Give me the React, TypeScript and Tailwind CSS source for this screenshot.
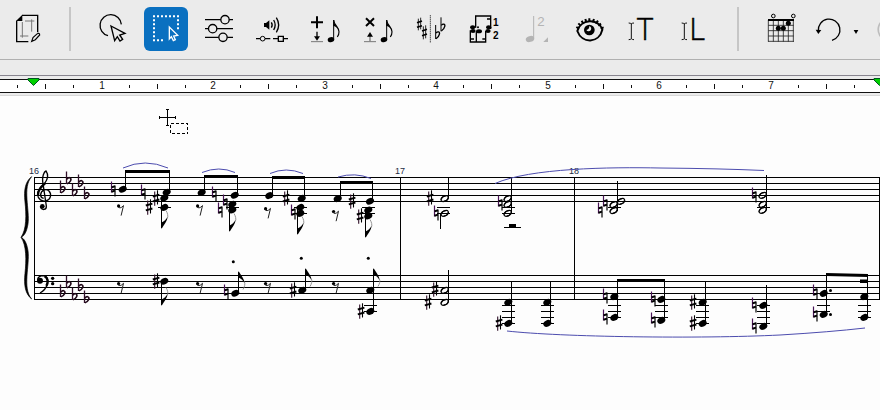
import type { ReactNode } from 'react';
import clsx from 'clsx';

interface ToolButtonProps {
  label: string;
  active?: boolean;
  disabled?: boolean;
  wide?: boolean;
  children: ReactNode;
}

// Icons are drawn on a grid three times finer than the button itself
function ToolButton({ label, active, disabled, wide, children }: ToolButtonProps) {
  return (
    <button
      type="button"
      aria-label={label}
      aria-pressed={active}
      disabled={disabled}
      className={clsx(
        'h-11 shrink-0 rounded-md',
        wide ? 'w-[53px]' : 'w-11',
        active ? 'bg-[#0a70c0] text-white' : 'text-black'
      )}
    >
      <svg viewBox={wide ? '0 0 159 132' : '0 0 132 132'} className="block h-11 w-full" fill="none" stroke="currentColor" strokeWidth={4}>
        {children}
      </svg>
    </button>
  );
}

function Separator() {
  return <div className="mr-[11px] ml-2.5 h-11 w-0.5 shrink-0 bg-[#c6c6c6]" />;
}

function EighthNote() {
  return (
    <g>
      <ellipse cx="84" cy="98" rx="10" ry="7.5" transform="rotate(-18 84 98)" fill="currentColor" stroke="none" />
      <path d="M92 97V39" strokeWidth={3} />
      <path d="M92 39C93 55 108 60 108 74C108 80 106 86 103 90" strokeWidth={3.5} />
      <path d="M91 40C93 52 104 58 107 68C101 60 96 58 91 57Z" fill="currentColor" stroke="none" />
    </g>
  );
}

function TextCaret() {
  return <path d="M31 49V95M23 48Q29 48 31 51Q33 48 39 48M23 98Q29 98 31 95Q33 98 39 98" stroke="#111" strokeWidth={3} />;
}

function Toolbar() {
  return (
    <header className="flex h-[60px] items-start gap-[9px] overflow-hidden border-b border-[#b0b0b0] bg-[#ebebeb] pt-[7px] pl-1.5">
      <ToolButton label="Page layout">
        <path d="M32 41V104H67M48 25H95V76" />
        <path d="M49 23L30 42H49Z" fill="currentColor" stroke="none" />
        <path d="M49 45V92M77 37V74M57 42H85M42 87H67" stroke="#777" strokeWidth={3} />
        <path d="M77 103L81 92L94 80Q101 77 101 84L88 98Z" strokeWidth={3.5} />
      </ToolButton>
      <Separator />
      <ToolButton label="Lasso selection">
        <path d="M51 86A32 32 0 1 1 91 52" />
        <path d="M60 57L102 79L86 84L95 97L87 102L79 89L71 101Z" />
      </ToolButton>
      <ToolButton label="Rectangle selection" active>
        <path d="M27 28H105" strokeWidth={6} strokeDasharray="6 6" />
        <path d="M30 37V103" strokeWidth={6} strokeDasharray="6 6" />
        <path d="M102 37V70" strokeWidth={6} strokeDasharray="6 6" />
        <path d="M39 100H60" strokeWidth={6} strokeDasharray="6 6" />
        <path d="M76 60V96L82 89L88 101L94 98L89 87L101 85Z" strokeWidth={4} />
      </ToolButton>
      <ToolButton label="Filter options">
        <path d="M24 38H108M24 65H108M24 91H108" />
        <circle cx="84" cy="38" r="12.5" fill="#ebebeb" />
        <circle cx="47" cy="65" r="12.5" fill="#ebebeb" />
        <circle cx="78" cy="91" r="12.5" fill="#ebebeb" />
      </ToolButton>
      <ToolButton label="Playback settings">
        <path d="M42 48H48L58 40V68L48 60H42Z" fill="currentColor" stroke="none" />
        <path d="M64 46Q69 54 64 62M71 39Q80 54 71 69M79 32Q93 54 79 76" />
        <path d="M18 95H31M45 95H61M69 95H85M100 95H114" />
        <circle cx="38" cy="95" r="7" strokeWidth={3} />
        <path d="M85 88H100V103H85Z" />
      </ToolButton>
      <ToolButton label="Insert note">
        <path d="M24 46H60M42 28V64" strokeWidth={6} />
        <path d="M42 74V92" />
        <path d="M33 88H51L42 101Z" fill="currentColor" stroke="none" />
        <path d="M24 104H60" stroke="#777" strokeWidth={3} />
        <EighthNote />
      </ToolButton>
      <ToolButton label="Delete note">
        <path d="M30 34L54 57M54 34L30 57" strokeWidth={6} />
        <path d="M42 87V103" stroke="#777" />
        <path d="M33 89H51L42 75Z" fill="currentColor" stroke="none" />
        <path d="M24 104H60" stroke="#777" strokeWidth={3} />
        <EighthNote />
      </ToolButton>
      <ToolButton label="Accidentals">
        <path d="M28 35V70M35 32V67M43 58V97M50 55V94" strokeWidth={2.5} />
        <path d="M24 47L39 42M24 61L39 56M39 72L54 67M39 86L54 81" strokeWidth={5} />
        <path d="M64 25V107" strokeWidth={3} strokeDasharray="3 3" />
        <path d="M80 54V96M96 31V73" strokeWidth={3} />
        <path d="M81 78C86 72 94 74 91 82C90 88 85 92 81 95M97 55C102 49 110 51 107 59C106 65 101 69 97 72" strokeWidth={4} />
      </ToolButton>
      <ToolButton label="Voices">
        <path d="M41 62V27H86V66M75 36H86" />
        <path d="M25 70V105H71V72M43 74V105M26 96H36M61 96H71" />
        <g fill="currentColor" stroke="none">
          <ellipse cx="32" cy="61" rx="8" ry="6" />
          <ellipse cx="33" cy="72" rx="8" ry="6" />
          <ellipse cx="51" cy="73" rx="9" ry="6" />
          <ellipse cx="80" cy="61" rx="8" ry="6" />
          <ellipse cx="78" cy="72" rx="8" ry="6" />
          <circle cx="48" cy="61" r="3" />
          <g className="font-['Liberation_Sans'] font-bold" fontSize="30">
            <text x="93" y="57">1</text>
            <text x="93" y="96">2</text>
          </g>
        </g>
      </ToolButton>
      <ToolButton label="Second voice note" disabled>
        <ellipse cx="45" cy="96" rx="13" ry="9" transform="rotate(-18 45 96)" fill="#b4b4b4" stroke="none" />
        <path d="M56 94V27" stroke="#b4b4b4" strokeWidth={3} />
        <path d="M99 91V105H85Z" fill="#b4b4b4" stroke="none" />
        <text x="67" y="57" fontSize="40" fill="#b4b4b4" stroke="none" className="font-['Liberation_Sans']">2</text>
      </ToolButton>
      <ToolButton label="Show or hide">
        <path d="M28 72C38 35 92 33 103 68C93 110 42 111 28 72Z" strokeWidth={6} />
        <circle cx="64" cy="69" r="16" fill="currentColor" stroke="none" />
        <path d="M64 57A8 8 0 1 1 55 69Q64 68 64 57Z" fill="#ebebeb" stroke="none" />
        <path d="M32 64L25 60M38 56L31 49M46 50L41 41M55 46L52 36M64 45V34M74 46L78 36M83 50L90 41M91 56L99 50M98 64L107 61" strokeWidth={6} />
      </ToolButton>
      <ToolButton label="Edit text">
        <TextCaret />
        <text x="48" y="99" fontSize="92" fill="currentColor" strokeWidth={1.5} className="font-['Open_Sans'] font-light">T</text>
      </ToolButton>
      <ToolButton label="Edit lyrics">
        <TextCaret />
        <text x="46" y="99" fontSize="92" fill="currentColor" strokeWidth={1.5} className="font-['Open_Sans'] font-light">L</text>
      </ToolButton>
      <Separator />
      <ToolButton label="Chord diagram">
        <path d="M28 39V104M43 39V104M58 39V104M73 39V104M88 39V104M103 39V104M28 55H104M28 71H104M28 87H104M27 103H105" stroke="#222" strokeWidth={2.5} />
        <path d="M27 39H105" strokeWidth={6} />
        <g fill="currentColor" stroke="none">
          <circle cx="58" cy="64" r="7.5" />
          <circle cx="73" cy="64" r="7.5" />
          <circle cx="88" cy="49" r="7.5" />
        </g>
        <circle cx="43" cy="27" r="5.5" strokeWidth={3} />
        <circle cx="103" cy="27" r="5.5" strokeWidth={3} />
      </ToolButton>
      <ToolButton label="Undo" wide>
        <path d="M19 72A32.5 32.5 0 1 1 60 100" />
        <path d="M11 68L28 69L19 81Z" fill="currentColor" stroke="none" />
        <path d="M125 69H139L132 81Z" fill="currentColor" stroke="none" />
      </ToolButton>
      <ToolButton label="Redo" disabled>
        <path d="M36 99A33 33 0 1 1 78 74" stroke="#bdbdbd" strokeWidth={5} />
      </ToolButton>
    </header>
  );
}

const UNIT = 111.5;

function Ruler() {
  const quarters = Array.from({ length: 31 }, (_, i) => i);
  return (
    <div className="bg-[#ebebeb] pt-[15px]">
      <svg className="block h-[21px] w-full border-t border-[#88858f]" shapeRendering="crispEdges">
        <rect y="3" width="100%" height="14" fill="#111" />
        <rect y="4" width="100%" height="12" fill="#fff" />
        <rect y="19" width="100%" height="1" fill="#d8d8d8" />
        {quarters.map((i) => {
          const x = Math.floor(17.8 + (i * UNIT) / 4);
          if (i % 4 === 3) {
            return (
              <text key={i} x={x + 1} y="13" fontSize="10" textAnchor="middle" fill="#111" className="font-['Liberation_Sans']">
                {(i + 1) / 4}
              </text>
            );
          }
          const half = i % 4 === 1;
          return <rect key={i} x={x} y={half ? 8 : 9} width="1" height={half ? 5 : 3} fill="#111" />;
        })}
        {[33, 879].map((x) => (
          <path key={x} d={`M${x - 5} 2.5H${x + 6}V4L${x + 0.5} 9.5L${x - 5} 4Z`} fill="#00d000" stroke="#052" shapeRendering="auto" />
        ))}
      </svg>
    </div>
  );
}

type Point = [number, number];

const TREBLE_LINES = [177.5, 183.5, 189.5, 195.5, 201.5];
const BASS_LINES = [275.5, 281.5, 287.5, 293.5, 299.5];
const BAR_LINES = [34.5, 400.5, 574.5, 879.5];

const FLATS: Point[] = [
  [60, 189.5], [66, 180.5], [72, 192.5], [78, 183.5], [84, 195.5],
  [60, 293.5], [66, 284.5], [72, 296.5], [78, 287.5], [84, 299.5],
];

const NATURALS: Point[] = [
  [113, 189], [143, 192], [214, 194], [225, 202], [220, 210], [293, 212],
  [436, 213], [500, 203], [605, 203], [600, 210], [754, 195],
  [226, 292], [605, 296], [605, 317], [653, 299], [653, 320],
  [754, 305], [754, 326], [815, 292], [815, 314],
];

const SHARPS: Point[] = [
  [156, 198], [149, 207], [286, 198], [352, 201], [360, 216], [430, 198],
  [156, 281], [293, 290], [361, 311], [435, 289], [428, 302],
  [499, 323], [693, 302], [693, 323],
];

const HEADS: Point[] = [
  [122.7, 189.3], [166.7, 192.3], [164.3, 198], [164.3, 207.4],
  [201.7, 192.5], [234.7, 195.3], [232.3, 204.3], [232.3, 210],
  [269.3, 195.6], [301.7, 198.4], [300.3, 207.4], [300.3, 213.4],
  [337.7, 198.6], [370, 201.3], [368.3, 210], [368.3, 216],
  [164.3, 281.3], [235.3, 293.3], [302.3, 290.3], [370.3, 290.3], [370.3, 311.4],
  [508.3, 302.3], [508.3, 323.4], [547.3, 302.3], [547.3, 323.4],
  [614.3, 296.6], [614.3, 317.4], [661.3, 299.4], [661.3, 320.4],
  [702.7, 302.3], [702.7, 323.4], [763.3, 305.4], [763.3, 326.4],
  [823.7, 293.4], [823.7, 314.4], [864.3, 296.6], [864.3, 317.4],
];

const HALF_HEADS: Point[] = [
  [444.7, 198.6], [444.7, 213.4], [507.7, 198.6], [507.7, 204.4], [507.7, 213.4],
  [621, 201.4], [613.7, 204.6], [613.7, 210.6],
  [762.7, 195.4], [762.7, 204.4], [762.7, 210.4],
  [444.7, 290.4], [444.7, 302.4],
];

// x, top, bottom
const STEMS: [number, number, number][] = [
  [125.5, 171, 189], [169.5, 171, 192], [161.5, 198, 228],
  [204.5, 176, 192], [237.5, 176, 195], [229.5, 204, 231],
  [272.5, 177, 195], [304.5, 177, 198], [297.5, 207, 234],
  [340.5, 182, 198], [372.5, 182, 201], [365.5, 210, 237],
  [448.5, 178, 198], [440.5, 213, 229], [511.5, 178, 213],
  [617.5, 181, 211], [766.5, 175, 210],
  [161.5, 281, 305], [238.5, 272, 293], [305.5, 269, 290], [373.5, 269, 311],
  [448.5, 270, 302], [511.5, 281, 323], [550.5, 281, 323],
  [617.5, 280, 317], [664.5, 280, 320], [705.5, 281, 323], [766.5, 285, 326],
  [826.5, 274, 314], [867.5, 275, 317],
];

const FLAGS_DOWN: Point[] = [[161.5, 228], [229.5, 231], [297.5, 234], [365.5, 237], [161.5, 305]];
const FLAGS_UP: Point[] = [[238.5, 272], [305.5, 269], [373.5, 269]];

const RESTS: Point[] = [
  [120.3, 209.6], [199.3, 209.6], [267.3, 212.4], [335.3, 215.2],
  [120.3, 287.3], [199.3, 287.3], [267.3, 287.3], [335.3, 287.3],
];

// x start, then one line for each y
const LEDGERS: [number, number[]][] = [
  [158, [207.5]], [226, [207.5]], [294, [207.5, 213.5]], [362, [207.5, 213.5]],
  [437, [207.5, 213.5]], [502, [207.5, 213.5]], [608, [207.5]], [757, [207.5]],
  [364, [305.5, 311.5]], [502, [305.5, 311.5, 317.5, 323.5]], [541, [305.5, 311.5, 317.5, 323.5]],
  [608, [305.5, 311.5, 317.5]], [655, [305.5, 311.5, 317.5]], [696, [305.5, 311.5, 317.5, 323.5]],
  [757, [305.5, 311.5, 317.5, 323.5]], [817, [305.5, 311.5]], [858, [305.5, 311.5, 317.5]],
];

const DOTS: Point[] = [[233.3, 261.7], [301.3, 258.3], [368.3, 258.3], [830.5, 290.5], [830.5, 314.5]];

const SLURS = [
  'M123 168Q145 158 168 168',
  'M202 172.5Q219 165.5 235 172.5',
  'M270 173.5Q286 166.5 303 173.5',
  'M338 177Q355 172 371 178.5',
  'M495 183.5C530 168 610 167 660 168Q720 168.5 764 170.5',
  'M507 331C560 337 700 339 780 335Q830 332 865 328',
];

function Score() {
  return (
    <svg viewBox="0 96 880 314" className="block h-[314px] w-[880px] max-w-none" role="img" aria-label="Piano score, bars 16 to 18">
      <defs>
        <g id="flat" fill="none">
          <path d="M.5 -9V3.5" stroke="#301028" strokeWidth="1.3" />
          <path d="M.8 -1.2C3 -4.2 5.8 -2.5 4.6 .2C3.8 1.9 2 2.8 .8 3.4" stroke="#200818" strokeWidth="1.6" />
        </g>
        <g id="natural">
          <path d="M-1.5 -7.5V3.5" stroke="#4a1458" strokeWidth="1.2" />
          <path d="M2 -3.5V7.5" stroke="#000" strokeWidth="1.2" />
          <path d="M-1.5 -1.6L2 -2.8M-1.5 2.8L2 1.6" stroke="#000" strokeWidth="2" />
        </g>
        <g id="sharp" stroke="#000">
          <path d="M-1.3 -6.5V7.7" stroke="#301028" strokeWidth="1.1" />
          <path d="M1.5 -7.7V6.5" strokeWidth="1.1" />
          <path d="M-3.2 -1.5L3.4 -3.3M-3.2 3.3L3.4 1.5" strokeWidth="1.9" />
        </g>
        <ellipse id="head" rx="4.2" ry="3.1" transform="rotate(-28)" />
        <g id="half">
          <ellipse rx="4" ry="2.4" transform="rotate(-28)" fill="none" stroke="#000" strokeWidth="1.1" />
          <path d="M-3.4 1.2Q-3 -2.4 1 -2.8M3.4 -1.2Q3 2.4 -1 2.8" fill="none" stroke="#000" strokeWidth="1.2" />
        </g>
        <g id="flag">
          <path d="M0 1V-5.5C2.5 -6.5 5 -8.5 6 -11.5C6 -7 3 -4 0 1Z" />
          <path d="M5.8 -9.5C7 -12 6 -15 4.5 -17.5" fill="none" stroke="#888" strokeWidth=".9" />
        </g>
        <g id="rest">
          <circle cx="-1.7" cy="-3.7" r="1.6" />
          <path d="M-3 -3.4Q-.5 .2 3.2 -4L.8 6" fill="none" stroke="#222" strokeWidth="1" />
        </g>
      </defs>

      <g fill="none" stroke="#000" shapeRendering="crispEdges">
        {[...TREBLE_LINES, ...BASS_LINES].map((y) => (
          <path key={y} d={`M34 ${y}H880`} />
        ))}
        {BAR_LINES.map((x) => (
          <path key={x} d={`M${x} 177V300`} />
        ))}
        {STEMS.map(([x, top, bottom]) => (
          <path key={`${x}-${top}`} d={`M${x} ${top}V${bottom}`} />
        ))}
        {LEDGERS.map(([x, rows]) => rows.map((y) => <path key={`${x}-${y}`} d={`M${x} ${y}h13`} />))}
        <path d="M504 227.5H521" />
      </g>

      {/* Brace and clefs */}
      <g transform="translate(10 100) scale(.3333)">
        <path d="M65 230C36 262 60 330 54 372C50 396 43 407 34 412C43 417 50 428 54 452C60 496 36 564 65 597C46 582 41 556 45 520C49 482 50 436 33 412C50 388 49 344 45 306C41 270 46 244 65 230Z" stroke="#000" strokeWidth="2" />
        <path d="M91 320C95 332 110 331 109 318L98 244C96 230 102 215 108 213C114 222 115 236 104 250C94 260 82 270 83 285C84 298 96 305 107 303C122 300 126 283 117 273C108 265 93 270 92 284C92 290 96 294 101 295" fill="none" stroke="#000" strokeWidth="4" />
        <path d="M105 250C94 260 83 270 84 286" fill="none" stroke="#000" strokeWidth="7" />
        <circle cx="97" cy="319" r="7" />
        <circle cx="90" cy="542" r="9" />
        <path d="M83 541C82 530 92 527 100 527C112 528 116 540 112 553C108 566 100 574 90 579" fill="none" stroke="#000" strokeWidth="4" />
        <path d="M104 529C116 536 114 550 109 558" fill="none" stroke="#000" strokeWidth="7" />
        <circle cx="128" cy="535" r="5" />
        <circle cx="128" cy="551" r="5" />
      </g>

      {FLATS.map(([x, y]) => <use key={`${x}-${y}`} href="#flat" x={x} y={y} />)}
      {NATURALS.map(([x, y]) => <use key={`${x}-${y}`} href="#natural" x={x} y={y} />)}
      {SHARPS.map(([x, y]) => <use key={`${x}-${y}`} href="#sharp" x={x} y={y} />)}
      {HEADS.map(([x, y]) => <use key={`${x}-${y}`} href="#head" x={x} y={y} />)}
      {HALF_HEADS.map(([x, y]) => <use key={`${x}-${y}`} href="#half" x={x} y={y} />)}
      {RESTS.map(([x, y]) => <use key={`${x}-${y}`} href="#rest" x={x} y={y} />)}
      {FLAGS_DOWN.map(([x, y]) => <use key={`${x}-${y}`} href="#flag" x={x} y={y} />)}
      {FLAGS_UP.map(([x, y]) => <use key={`${x}-${y}`} href="#flag" transform={`translate(${x} ${y}) scale(1 -1)`} />)}
      {DOTS.map(([x, y]) => <circle key={`${x}-${y}`} cx={x} cy={y} r="1.5" />)}

      {/* Beams and the half rest */}
      <path d="M125 170H170V173H125ZM204 175H238V178H204ZM272 176H305V179H272ZM340 181H373V184H340ZM617 279H665V282H617ZM826 273L868 274V277L826 276ZM860 279.5H868V283H860ZM509 224H516V228H509Z" />

      <g className="font-['Liberation_Sans']" fontSize="9" textAnchor="middle" fill="#1c2c44">
        <text x="34" y="174">16</text>
        <text x="400" y="174">17</text>
        <text x="574" y="174">18</text>
      </g>

      <g fill="none" stroke="#4c4cae">
        {SLURS.map((d) => <path key={d} d={d} />)}
      </g>

      {/* Pointer with its selection box */}
      <g fill="none" stroke="#000" shapeRendering="crispEdges">
        <path d="M159 117.5H176M167.5 109V126M166 109.5H169M166 125.5H169M159.5 116V119M175.5 116V119" />
        <path d="M170.5 123.5H187.5V133.5H170.5Z" strokeDasharray="3 2" />
      </g>
    </svg>
  );
}

export default function App() {
  return (
    <div className="flex min-h-screen flex-col overflow-hidden bg-[#fdfdfd] font-['Liberation_Sans',sans-serif]">
      <Toolbar />
      <Ruler />
      <main className="flex-1 overflow-hidden">
        <Score />
      </main>
    </div>
  );
}
